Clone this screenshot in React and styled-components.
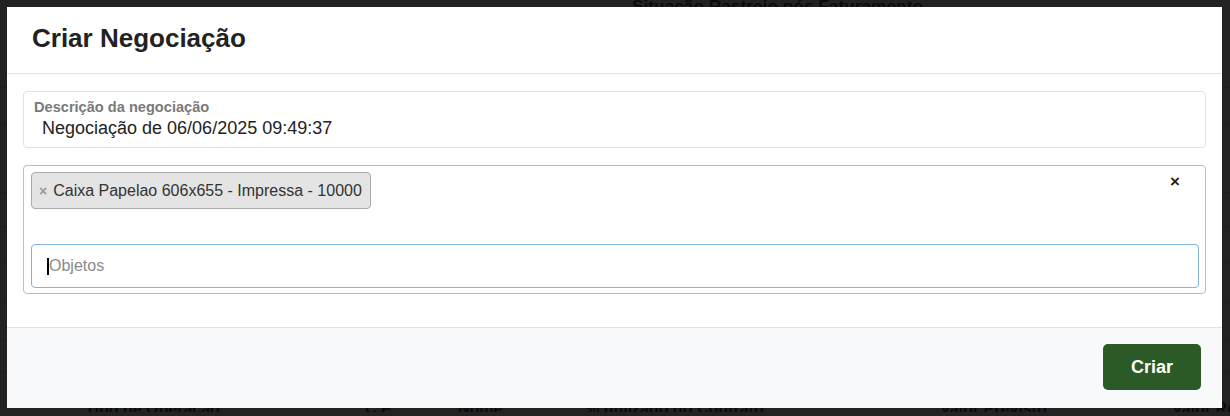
import React from "react";
import styled, { createGlobalStyle } from "styled-components";

const GlobalStyle = createGlobalStyle`
  html, body {
    margin: 0;
    padding: 0;
    background: #ffffff;
    font-family: "Liberation Sans", Arial, sans-serif;
    overflow: hidden;
  }
  * {
    box-sizing: border-box;
  }
`;

/* pagina por tras do modal */
const Page = styled.div`
  width: 1230px;
  height: 416px;
  color: #555;
`;

const PageTitle = styled.h2`
  margin: -4px 0 0 632px;
  font-size: 17.3px;
  line-height: 20px;
  font-weight: bold;
`;

const PageRow = styled.div`
  height: ${(p) => p.h}px;
  border-bottom: 1px solid #dee2e6;
`;

const TableHead = styled.div`
  display: grid;
  grid-template-columns: 280px 93px 127px 355px 232px 1fr;
  padding: 26px 0 0 85px;
  font-size: 16px;
  line-height: 20px;
  font-weight: bold;
  white-space: nowrap;
`;

const Backdrop = styled.div`
  position: fixed;
  inset: 0;
  background: rgba(0, 0, 0, 0.865);
`;

const Dialog = styled.div`
  position: fixed;
  top: 7px;
  left: 7px;
  width: 1215px;
  height: 401px;
  background: #fff;
  display: flex;
  flex-direction: column;
`;

const Header = styled.div`
  height: 67px;
  display: flex;
  align-items: center;
  padding: 0 25px 3px;
  border-bottom: 1px solid #dee2e6;
`;

const Title = styled.h4`
  margin: 0;
  font-size: 26px;
  font-weight: bold;
  color: #222;
`;

const Body = styled.div`
  padding: 17px 16px 33px;
  display: flex;
  flex-direction: column;
  gap: 17px;
`;

const Field = styled.div`
  border: 1px solid #dee2e6;
  border-radius: 4px;
  padding: 7px 10px;
  display: flex;
  flex-direction: column;
  gap: 2px;
`;

const Label = styled.label`
  font-size: 14.6px;
  line-height: 16px;
  font-weight: bold;
  color: #7a7a7a;
`;

const Value = styled.div`
  font-size: 18px;
  line-height: 23px;
  color: #222;
  padding-left: 8px;
`;

const SelectBox = styled.div`
  height: 129px;
  border: 1px solid #bdbdbd;
  border-radius: 4px;
  padding: 6px 6px 5px 7px;
  display: flex;
  flex-direction: column;
  gap: 35px;
`;

const TagRow = styled.div`
  display: flex;
  justify-content: space-between;
  align-items: flex-start;
`;

const Tag = styled.span`
  height: 37px;
  display: inline-flex;
  align-items: center;
  gap: 6px;
  padding: 0 8px 0 7px;
  background: #e4e4e4;
  border: 1px solid #aaa;
  border-radius: 4px;
  font-size: 16px;
  color: #333;
`;

const TagRemove = styled.span`
  font-size: 14px;
  font-weight: bold;
  color: #999;
  line-height: 1;
`;

const ClearAll = styled.span`
  font-size: 17px;
  line-height: 20px;
  font-weight: bold;
  color: #222;
  margin-right: 19px;
`;

const SearchInput = styled.div`
  height: 44px;
  border: 1px solid #80b3dd;
  border-radius: 4px;
  display: flex;
  align-items: center;
  padding-left: 15px;
`;

const Caret = styled.span`
  width: 2px;
  height: 17px;
  background: #000;
`;

const Placeholder = styled.span`
  font-size: 16px;
  color: #8a8a8a;
`;

const Footer = styled.div`
  flex: 1;
  background: #f8f9fa;
  border-top: 1px solid #dee2e6;
  display: flex;
  justify-content: flex-end;
  align-items: flex-start;
  padding: 16px 21px 18px;
`;

const Button = styled.button`
  height: 46px;
  padding: 0 28px;
  border: none;
  border-radius: 5px;
  background: #2b5a27;
  color: #fff;
  font-family: inherit;
  font-size: 18px;
  font-weight: bold;
  cursor: pointer;
`;

const rows = [72, 37, 68, 34, 36, 40, 37, 33];
const columns = [
  "Tipo de Operação",
  "C.F.",
  "Nome",
  "% utilizado do Contrato",
  "Valor Previsto",
  "Valor Realizado",
];

function App() {
  return (
    <>
      <GlobalStyle />
      <Page>
        <PageTitle>Situação Rastreio pós Faturamento</PageTitle>
        {rows.map((h, i) => (
          <PageRow key={i} h={h} />
        ))}
        <TableHead>
          {columns.map((c) => (
            <span key={c}>{c}</span>
          ))}
        </TableHead>
      </Page>
      <Backdrop />
      <Dialog>
        <Header>
          <Title>Criar Negociação</Title>
        </Header>
        <Body>
          <Field>
            <Label>Descrição da negociação</Label>
            <Value>Negociação de 06/06/2025 09:49:37</Value>
          </Field>
          <SelectBox>
            <TagRow>
              <Tag>
                <TagRemove>×</TagRemove>
                Caixa Papelao 606x655 - Impressa - 10000
              </Tag>
              <ClearAll>×</ClearAll>
            </TagRow>
            <SearchInput>
              <Caret />
              <Placeholder>Objetos</Placeholder>
            </SearchInput>
          </SelectBox>
        </Body>
        <Footer>
          <Button>Criar</Button>
        </Footer>
      </Dialog>
    </>
  );
}

export default App;
